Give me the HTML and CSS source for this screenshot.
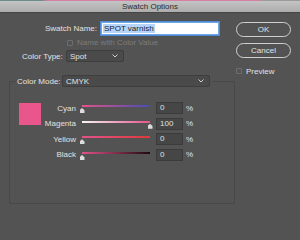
FILE: index.html
```html
<!DOCTYPE html>
<html lang="en">
<head>
  <meta charset="UTF-8" />
  <title>Swatch Options</title>
  <link rel="stylesheet" href="styles.css">
</head>
<body>

<div class="desk"></div>
<div class="titlebar">Swatch Options</div>

<div class="dialog">
  <div class="main">
    <div class="row row-name">
      <label class="lbl-name">Swatch Name:</label>
      <div class="text-input"><span class="sel">SPOT varnish</span></div>
    </div>

    <div class="row row-check">
      <span class="check"></span>
      <span class="dim">Name with Color Value</span>
    </div>

    <div class="row row-type">
      <label class="lbl-type">Color Type:</label>
      <div class="select sel-type">Spot
        <svg class="chev" width="6" height="4" viewBox="0 0 6 4"><path d="M0.5 0.5 L3 3 L5.5 0.5" fill="none" stroke="#cfcfcf" stroke-width="1"/></svg>
      </div>
    </div>

    <fieldset class="group">
      <legend class="legend">
        <label class="lbl-mode">Color Mode:</label>
        <div class="select sel-mode">CMYK
          <svg class="chev" width="6" height="4" viewBox="0 0 6 4"><path d="M0.5 0.5 L3 3 L5.5 0.5" fill="none" stroke="#cfcfcf" stroke-width="1"/></svg>
        </div>
      </legend>

      <div class="mix">
        <div class="swatch"></div>
        <div class="channels">
          <div class="channel">
            <span class="ch-name">Cyan</span>
            <div class="slider"><div class="track cyan"></div><div class="thumb" style="--v:0"></div></div>
            <div class="num">0</div><span class="pct">%</span>
          </div>
          <div class="channel">
            <span class="ch-name">Magenta</span>
            <div class="slider"><div class="track magenta"></div><div class="thumb" style="--v:1"></div></div>
            <div class="num">100</div><span class="pct">%</span>
          </div>
          <div class="channel">
            <span class="ch-name">Yellow</span>
            <div class="slider"><div class="track yellow"></div><div class="thumb" style="--v:0"></div></div>
            <div class="num">0</div><span class="pct">%</span>
          </div>
          <div class="channel">
            <span class="ch-name">Black</span>
            <div class="slider"><div class="track black"></div><div class="thumb" style="--v:0"></div></div>
            <div class="num">0</div><span class="pct">%</span>
          </div>
        </div>
      </div>
    </fieldset>
  </div>

  <div class="side">
    <button class="btn">OK</button>
    <button class="btn">Cancel</button>
    <div class="preview"><span class="check"></span><span>Preview</span></div>
  </div>
</div>

</body>
</html>
```

FILE: styles.css
```css
:root {
  --panel: #535353;
  --text: #e2e2e2;
  --field: #464646;
  --field-line: #3b3b3b;
  --pink: #e8568c;
}

* {
  box-sizing: border-box;
  margin: 0;
  padding: 0;
}

body {
  width: 300px;
  height: 240px;
  overflow: hidden;
  background: var(--panel);
  font-family: 'Liberation Sans', Arial, sans-serif;
  font-size: 8px;
  color: var(--text);
}

.desk {
  height: 1px;
  background: linear-gradient(to right, #6c8c8e 0 14%, #d77fa2 16% 86%, #9a9a9a 88%);
}

.titlebar {
  height: 12px;
  line-height: 12px;
  text-align: center;
  color: #2c2c2c;
  font-size: 8px;
  background: linear-gradient(#c4c4c4, #acacac);
  border-bottom: 1px solid #454545;
}

.dialog {
  display: flex;
  padding-top: 9px;
}

.main {
  width: 236px;
}

.row {
  display: flex;
  align-items: center;
}

/* swatch name */
.row-name {
  height: 13px;
}

.lbl-name {
  width: 97px;
  text-align: right;
  margin-right: 4px;
}

.text-input {
  width: 118px;
  height: 13px;
  background: #fff;
  border: 1px solid #6fa6e6;
  box-shadow: 0 0 0 1px #4d8ad6;
  padding: 1px 1px;
  display: flex;
  align-items: center;
}

.sel {
  background: #b4d4fb;
  color: #1c1c1c;
  padding: 0 1px;
  line-height: 9px;
}

/* name with color value */
.row-check {
  height: 9px;
  margin-top: 3px;
  padding-left: 67px;
}

.check {
  width: 6px;
  height: 6px;
  border: 1px solid #6e6e6e;
  border-radius: 1px;
  margin-right: 4px;
}

.dim {
  color: #7c7c7c;
}

/* color type */
.row-type {
  height: 12px;
  margin-top: 3px;
  padding-left: 22px;
}

.lbl-type {
  width: 44px;
}

.select {
  height: 12px;
  background: #4a4a4a;
  border: 1px solid #3e3e3e;
  border-radius: 2px;
  padding: 0 5px 0 3px;
  display: flex;
  align-items: center;
  justify-content: space-between;
}

.sel-type {
  width: 58px;
}

.sel-mode {
  width: 148px;
}

/* color mode group */
.group {
  margin: 13px 0 0 9px;
  width: 226px;
  height: 129px;
  border: 1px solid #484848;
  border-radius: 2px;
  padding: 15px 0 0 6px;
}

.legend {
  display: flex;
  align-items: center;
  padding: 0 2px 0 1px;
}

.lbl-mode {
  width: 45px;
}

.mix {
  display: flex;
}

.swatch {
  width: 22px;
  height: 22px;
  margin: 1px 0 0 3px;
  background: var(--pink);
}

.channels {
  display: flex;
  flex-direction: column;
  gap: 3.67px;
}

.channel {
  display: flex;
  height: 12px;
  align-items: center;
}

.ch-name {
  width: 35px;
  text-align: right;
  margin-right: 6px;
}

.slider {
  width: 68px;
  height: 12px;
  padding-top: 3px;
  margin-right: 6px;
}

.track {
  height: 2px;
}

.track.cyan { background: linear-gradient(to right, #e4528b, #4a4cb4); }
.track.magenta { background: linear-gradient(to right, #f6f6f6, #e6528a); }
.track.yellow { background: linear-gradient(to right, #e2528a, #e03a3a); }
.track.black { background: linear-gradient(to right, #e2528a, #1e0a0e); }

.thumb {
  width: 5px;
  height: 5px;
  margin-top: 1px;
  margin-left: calc(var(--v) * 68px - 2.5px);
  background: #dcdcdc;
  clip-path: polygon(50% 0, 100% 45%, 100% 100%, 0 100%, 0 45%);
}

.num {
  width: 27px;
  height: 12px;
  background: var(--field);
  border: 1px solid var(--field-line);
  padding-left: 3px;
  line-height: 10px;
}

.pct {
  margin-left: 3px;
}

/* buttons */
.side {
  width: 55px;
  display: flex;
  flex-direction: column;
}

.btn {
  height: 15px;
  margin-bottom: 6px;
  border: 1px solid #cfcfcf;
  border-radius: 8px;
  background: var(--panel);
  color: var(--text);
  font: inherit;
}

.preview {
  display: flex;
  align-items: center;
  margin-top: 3px;
  height: 8px;
}
```
